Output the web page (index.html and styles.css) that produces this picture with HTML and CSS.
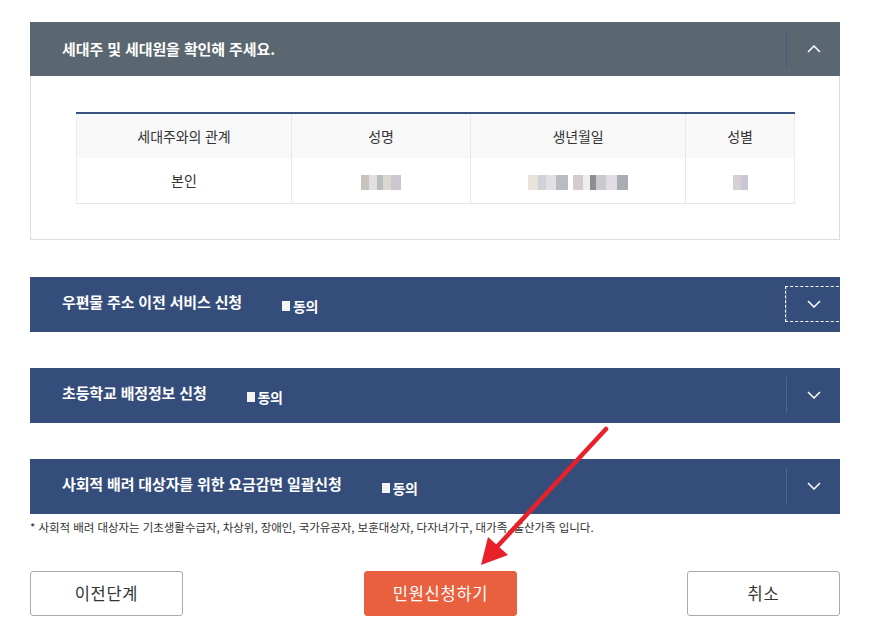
FILE: index.html
```html
<!DOCTYPE html>
<html lang="ko">
<head>
<meta charset="utf-8">
<link rel="stylesheet" href="styles.css">
</head>
<body>
<div class="page">
  <section class="panel">
    <div class="panel-head gray">
      <h2 class="title">세대주 및 세대원을 확인해 주세요.</h2>
      <div class="toggle">
        <svg width="14" height="8" viewBox="0 0 14 8"><path d="M1 7 L7 1 L13 7" fill="none" stroke="#fff" stroke-width="1.5"/></svg>
      </div>
    </div>
    <div class="panel-body">
      <table class="family">
        <colgroup><col class="c1"><col class="c2"><col class="c3"><col class="c4"></colgroup>
        <thead>
          <tr><th>세대주와의 관계</th><th>성명</th><th>생년월일</th><th>성별</th></tr>
        </thead>
        <tbody>
          <tr>
            <td>본인</td>
            <td><span class="blur b-name"></span></td>
            <td><span class="blur b-date1"></span><span class="blur b-date2"></span></td>
            <td><span class="blur b-sex"></span></td>
          </tr>
        </tbody>
      </table>
    </div>
  </section>

  <section class="bar focused">
    <h2 class="title">우편물 주소 이전 서비스 신청</h2>
    <span class="agree"><i class="box"></i>동의</span>
    <div class="toggle">
      <svg width="14" height="8" viewBox="0 0 14 8"><path d="M1 1 L7 7 L13 1" fill="none" stroke="#fff" stroke-width="1.5"/></svg>
    </div>
  </section>

  <section class="bar">
    <h2 class="title">초등학교 배정정보 신청</h2>
    <span class="agree"><i class="box"></i>동의</span>
    <div class="toggle">
      <svg width="14" height="8" viewBox="0 0 14 8"><path d="M1 1 L7 7 L13 1" fill="none" stroke="#fff" stroke-width="1.5"/></svg>
    </div>
  </section>

  <section class="bar">
    <h2 class="title">사회적 배려 대상자를 위한 요금감면 일괄신청</h2>
    <span class="agree"><i class="box"></i>동의</span>
    <div class="toggle">
      <svg width="14" height="8" viewBox="0 0 14 8"><path d="M1 1 L7 7 L13 1" fill="none" stroke="#fff" stroke-width="1.5"/></svg>
    </div>
  </section>
  <p class="note">* 사회적 배려 대상자는 기초생활수급자, 차상위, 장애인, 국가유공자, 보훈대상자, 다자녀가구, 대가족, 출산가족 입니다.</p>

  <div class="actions">
    <button class="btn">이전단계</button>
    <button class="btn primary">민원신청하기</button>
    <button class="btn last">취소</button>
  </div>
</div>
<svg class="arrow" width="869" height="633" viewBox="0 0 869 633">
  <line x1="606" y1="429" x2="494" y2="550" stroke="#e8202a" stroke-width="4.5" stroke-linecap="round"/>
  <polygon points="481,565 488,537 508,555" fill="#e8202a"/>
</svg>
</body>
</html>
```
FILE: styles.css
```css
* { box-sizing: border-box; }
html, body { margin: 0; padding: 0; background: #fff; }
body {
  font-family: "Noto Sans CJK KR", "Noto Sans", sans-serif;
  color: #333;
  position: relative;
  width: 869px;
  height: 633px;
  overflow: hidden;
}
.page {
  width: 810px;
  margin: 22px 0 0 30px;
  display: flex;
  flex-direction: column;
}
.title {
  margin: 0;
  font-size: 15px;
  font-weight: 700;
  color: #fff;
  letter-spacing: -0.15px;
  line-height: 20px;
}
.panel-head {
  height: 54px;
  display: flex;
  align-items: center;
  padding-left: 32px;
  background: #5a6670;
}
.panel-head .title { flex: 1; letter-spacing: -0.1px; }
.toggle {
  width: 54px;
  height: 35px;
  border-left: 1px solid #3f5a88;
  display: flex;
  align-items: center;
  justify-content: center;
  flex-shrink: 0;
  margin-left: auto;
}
.toggle svg { display: block; }
.panel-body {
  border: 1px solid #dcdcdc;
  border-top: none;
  padding: 36px 45px 35px 45px;
}
.family {
  width: 718px;
  border-collapse: collapse;
  table-layout: fixed;
  border-top: 2px solid #3a5282;
  font-size: 14px;
}
.c1 { width: 215px; }
.c2 { width: 179px; }
.c3 { width: 215px; }
.c4 { width: 109px; }
.family th, .family td {
  height: 45px;
  text-align: center;
  font-weight: 400;
  color: #333;
  border-left: 1px solid #e8e8e8;
  padding: 0;
}
.family th:first-child, .family td:first-child { border-left: 1px solid #ececec; }
.family th:last-child, .family td:last-child { border-right: 1px solid #ececec; }
.family th { background: #f8f8f8; letter-spacing: -0.1px; }
.family td { border-bottom: 1px solid #e6e6e6; }
.blur {
  display: inline-block;
  height: 15px;
  vertical-align: middle;
  background:
    linear-gradient(90deg, #c9c3bf 0 20%, #e3dedf 20% 40%, #b9bdbf 40% 55%, #dcd6d0 55% 75%, #ccc7cf 75% 100%);
}
.b-name { width: 40px; }
.b-date1 { width: 40px; margin-right: 5px; background: linear-gradient(90deg, #e8e2d8 0 25%, #cfd3d8 25% 45%, #e2e0e0 45% 70%, #b8bcc2 70% 100%); }
.b-date2 { width: 55px; background: linear-gradient(90deg, #d2ccd0 0 18%, #eeeeee 18% 30%, #8c8e90 30% 42%, #c9cacd 42% 60%, #e2dde2 60% 80%, #a9acb2 80% 100%); }
.b-sex { width: 15px; background: linear-gradient(90deg, #d7d1d4 0 50%, #c9c6d6 50% 100%); }

.bar {
  height: 55px;
  margin-top: 36px;
  background: #344d7a;
  display: flex;
  align-items: center;
  padding-left: 32px;
  position: relative;
  overflow: hidden;
}
.panel + .bar { margin-top: 37px; }
.bar .title { margin-bottom: 4px; }
.agree {
  margin-left: 40px;
  margin-top: 3px;
  font-size: 14px;
  font-weight: 700;
  color: #fff;
  letter-spacing: -0.5px;
  display: inline-flex;
  align-items: center;
}
.box {
  width: 8px;
  height: 10px;
  background: #f4f4f4;
  margin-right: 3px;
  display: inline-block;
}
.bar .toggle {
  border-left-color: #4d6592;
  height: 36px;
  position: relative;
}
.focused .toggle::after {
  content: "";
  position: absolute;
  top: 0;
  bottom: 0;
  left: -2px;
  right: -4px;
  border: 1px dashed #fff;
}
.note {
  margin: 6px 0 0 0;
  font-size: 11.5px;
  line-height: 14px;
  letter-spacing: -0.05px;
  color: #333;
}
.actions {
  display: flex;
  margin-top: 37px;
}
.btn {
  width: 153px;
  height: 45px;
  border: 1px solid #a9a9a9;
  border-radius: 3px;
  background: #fff;
  font-family: "Noto Sans CJK KR", "Noto Sans", sans-serif;
  font-size: 16.5px;
  color: #333;
  letter-spacing: 0.7px;
  padding: 0;
}
.btn.primary {
  margin-left: 181px;
  background: #e9603f;
  border-color: #e9603f;
  color: #fff;
}
.btn.last { margin-left: auto; }
.arrow {
  position: absolute;
  left: 0;
  top: 0;
  pointer-events: none;
}
```
